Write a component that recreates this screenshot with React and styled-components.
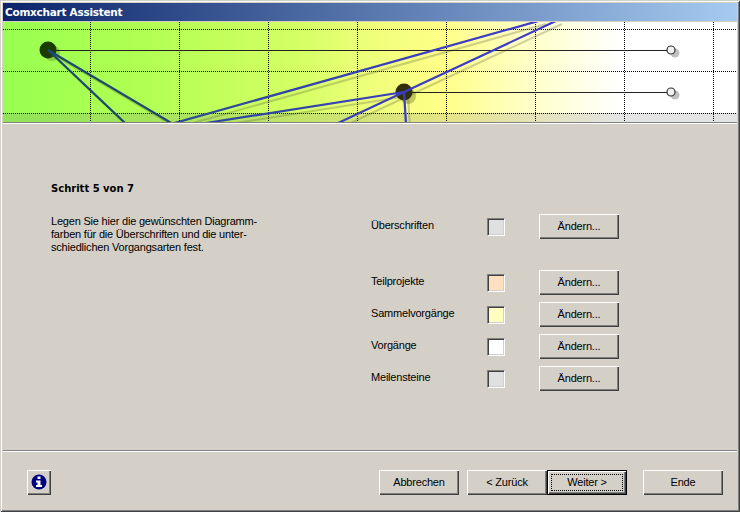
import React from "react";
import styled, { createGlobalStyle } from "styled-components";

const Global = createGlobalStyle`
  html, body { margin: 0; padding: 0; background: #d4d0c8; }
  * { box-sizing: border-box; }
`;

const Win = styled.div`
  width: 740px;
  height: 512px;
  padding: 3px;
  display: flex;
  flex-direction: column;
  background: #d4d0c8;
  box-shadow: inset 1px 1px 0 #d4d0c8, inset -1px -1px 0 #404040, inset 2px 2px 0 #fff, inset -2px -2px 0 #808080;
  font-family: "Liberation Sans", Arial, sans-serif;
  font-size: 11px;
  letter-spacing: -0.2px;
  color: #000;
`;

const TitleBar = styled.div`
  height: 18px;
  margin-bottom: 1px;
  padding: 0 0 0 2px;
  display: flex;
  align-items: center;
  background: linear-gradient(90deg, #0a246a, #a6caf0);
  color: #fff;
  font-family: "DejaVu Sans", Verdana, sans-serif;
  font-weight: bold;
  font-size: 10.5px;
  letter-spacing: -0.27px;
`;

const BannerSvg = styled.svg`
  display: block;
  width: 734px;
  height: 100px;
  flex: none;
`;

const Rule = styled.div`
  height: 2px;
  flex: none;
  background: #808080;
  border-bottom: 1px solid #fff;
`;

const Main = styled.div`
  flex: 1;
  display: flex;
  padding: 58px 0 0 48px;
`;

const Intro = styled.div`
  width: 320px;
  flex: none;
`;

const Heading = styled.div`
  font-family: "DejaVu Sans", Verdana, sans-serif;
  font-weight: bold;
  font-size: 10px;
  letter-spacing: 0;
  line-height: 13px;
  margin-bottom: 20px;
`;

const Para = styled.div`
  line-height: 13px;
`;

const Colors = styled.div`
  padding-top: 32px;
  display: flex;
  flex-direction: column;
  gap: 7px;
`;

const ColorRow = styled.div`
  height: 25px;
  display: grid;
  grid-template-columns: 116px 52px 80px;
  align-items: center;
  margin-top: ${(p) => (p.$spaced ? "24px" : "0")};
`;

const Label = styled.span`
  margin-bottom: 3px;
`;

const Swatch = styled.div`
  width: 18px;
  height: 18px;
  margin-top: 1px;
  background: ${(p) => p.$color};
  border: 1px solid;
  border-color: #808080 #fff #fff #808080;
  box-shadow: inset 1px 1px 0 #404040, inset -1px -1px 0 #d4d0c8;
`;

const Btn = styled.button`
  width: ${(p) => p.$w || 80}px;
  height: 25px;
  padding: 0 0 1px;
  margin: 0;
  flex: none;
  border: 0;
  display: flex;
  align-items: center;
  justify-content: center;
  background: #d4d0c8;
  font: inherit;
  letter-spacing: inherit;
  color: #000;
  box-shadow: inset 1px 1px 0 #fff, inset -1px -1px 0 #404040, inset -2px -2px 0 #808080;
`;

const DefaultBtn = styled(Btn)`
  position: relative;
  box-shadow: inset 0 0 0 1px #000, inset 2px 2px 0 #fff, inset -2px -2px 0 #404040, inset -3px -3px 0 #808080;
  &::after {
    content: "";
    position: absolute;
    inset: 4px;
    border: 1px dotted #000;
  }
`;

const Footer = styled.div`
  height: 57px;
  flex: none;
  display: flex;
  align-items: flex-start;
  padding: 18px 14px 0 24px;
`;

const Spacer = styled.div`
  flex: 1;
`;

const Gap = styled.div`
  width: ${(p) => p.$w}px;
  flex: none;
`;

const Banner = () => {
  const xs = [90.5, 179.5, 268.5, 357.5, 446.5, 535.5, 624.5, 713.5];
  const ys = [29.5, 71.5, 113.5];
  const lines = [
    [48, 50, 126, 124],
    [48, 50, 173, 124],
    [171, 124, 542, 20],
    [200, 124, 404, 92],
    [336, 124, 404, 92],
    [404, 92, 558, 20],
    [404, 92, 406, 124],
  ];
  return (
    <BannerSvg viewBox="3 22 734 100">
      <defs>
        <linearGradient id="bg" gradientUnits="userSpaceOnUse" x1="3" y1="0" x2="737" y2="0">
          <stop offset="0" stopColor="#98ff50" />
          <stop offset="0.17" stopColor="#aeff52" />
          <stop offset="0.4" stopColor="#d4ff64" />
          <stop offset="0.5" stopColor="#eeff7a" />
          <stop offset="0.6" stopColor="#ffff88" />
          <stop offset="0.7" stopColor="#ffffc0" />
          <stop offset="0.84" stopColor="#ffffff" />
          <stop offset="1" stopColor="#ffffff" />
        </linearGradient>
        <linearGradient id="ln" gradientUnits="userSpaceOnUse" x1="48" y1="0" x2="420" y2="0">
          <stop offset="0" stopColor="#1c4a6c" />
          <stop offset="0.4" stopColor="#2c4a96" />
          <stop offset="1" stopColor="#3c3cc4" />
        </linearGradient>
      </defs>
      <rect x="3" y="22" width="734" height="100" fill="url(#bg)" />
      <rect x="3" y="113" width="734" height="9" fill="#7a7a7a" fillOpacity="0.2" />
      {xs.map((x) => (
        <line key={x} x1={x} y1="22" x2={x} y2="122" stroke="#000" strokeDasharray="1 1" />
      ))}
      {ys.map((y) => (
        <line key={y} x1="3" y1={y} x2="737" y2={y} stroke="#000" strokeDasharray="1 1" />
      ))}
      <circle cx="52" cy="53" r="8" fill="#6a8a30" fillOpacity="0.45" />
      <circle cx="408" cy="96" r="8" fill="#707020" fillOpacity="0.4" />
      {lines.map(([a, b, c, d], i) => (
        <line key={"s" + i} x1={a + 4} y1={b + 4} x2={c + 4} y2={d + 4} stroke="#606040" strokeOpacity="0.3" strokeWidth="2" />
      ))}
      <circle cx="675" cy="53" r="4.5" fill="#c0c0c0" />
      <circle cx="675" cy="95" r="4.5" fill="#c0c0c0" />
      <line x1="48" y1="50.5" x2="667" y2="50.5" stroke="#222" />
      <line x1="404" y1="92.5" x2="667" y2="92.5" stroke="#222" />
      <circle cx="48" cy="50" r="8.5" fill="#1c3c00" />
      <circle cx="404" cy="92" r="8.5" fill="#302f08" />
      {lines.map(([a, b, c, d], i) => (
        <line key={"l" + i} x1={a} y1={b} x2={c} y2={d} stroke={i === 0 || i === 1 ? "#1c4a6c" : i < 5 ? "url(#ln)" : "#3c3cc8"} strokeWidth="2.2" />
      ))}
      <circle cx="671" cy="50" r="4" fill="#f0f0f0" stroke="#333" strokeWidth="1.2" />
      <circle cx="671" cy="92" r="4" fill="#f0f0f0" stroke="#333" strokeWidth="1.2" />
    </BannerSvg>
  );
};

const InfoIcon = () => (
  <svg width="16" height="16" viewBox="0 0 16 16">
    <circle cx="8" cy="8" r="7.5" fill="#000080" />
    <rect x="6.5" y="2.5" width="3" height="2.5" fill="#fff" />
    <path d="M5 6.5h4.5V11H11v2H5v-2h1.5V8.5H5z" fill="#fff" />
  </svg>
);

const rows = [
  ["Überschriften", "#e0e0e0"],
  ["Teilprojekte", "#ffdfbf", true],
  ["Sammelvorgänge", "#ffffc0"],
  ["Vorgänge", "#ffffff"],
  ["Meilensteine", "#e0e0e0"],
];

export default function App() {
  return (
    <Win>
      <Global />
      <TitleBar>Comxchart Assistent</TitleBar>
      <Banner />
      <Rule />
      <Main>
        <Intro>
          <Heading>Schritt 5 von 7</Heading>
          <Para>
            Legen Sie hier die gewünschten Diagramm-
            <br />
            farben für die Überschriften und die unter-
            <br />
            schiedlichen Vorgangsarten fest.
          </Para>
        </Intro>
        <Colors>
          {rows.map(([label, color, spaced]) => (
            <ColorRow key={label} $spaced={spaced}>
              <Label>{label}</Label>
              <Swatch $color={color} />
              <Btn>Ändern...</Btn>
            </ColorRow>
          ))}
        </Colors>
      </Main>
      <Rule />
      <Footer>
        <Btn $w={24}><InfoIcon /></Btn>
        <Spacer />
        <Btn>Abbrechen</Btn>
        <Gap $w={8} />
        <Btn>&lt; Zurück</Btn>
        <DefaultBtn>Weiter &gt;</DefaultBtn>
        <Gap $w={16} />
        <Btn>Ende</Btn>
      </Footer>
    </Win>
  );
}
